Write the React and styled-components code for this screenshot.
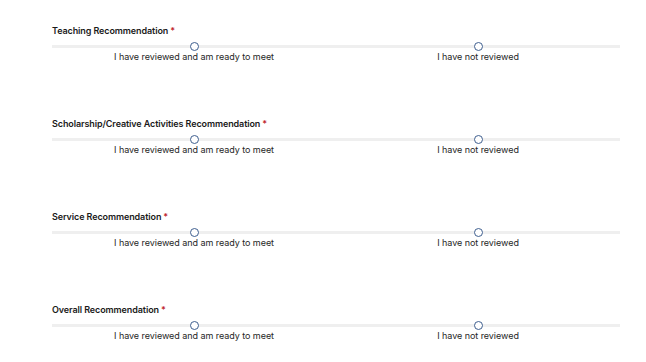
import React from 'react';
import styled, { createGlobalStyle } from 'styled-components';

const GlobalStyle = createGlobalStyle`
    html, body {
        margin: 0;
        padding: 0;
        background: #ffffff;
        font-family: Inter, "Noto Sans", sans-serif;
        color: #1f1f1f;
    }
`;

const Page = styled.div`
    width: 568px;
    padding: 25px 0 0 52px;
    display: flex;
    flex-direction: column;
    gap: 56px;
`;

const Question = styled.fieldset`
    margin: 0;
    padding: 0;
    border: none;
    height: 37px;
`;

const Title = styled.legend`
    padding: 0;
    font-size: 9px;
    font-weight: 600;
    line-height: 12px;
    letter-spacing: -0.1px;
    color: #1a1a1a;
`;

const Required = styled.span`
    color: #c0262d;
    margin-left: 2px;
`;

const Scale = styled.div`
    position: relative;
    margin-top: 5px;
    display: grid;
    grid-template-columns: 1fr 1fr;

    &::before {
        content: '';
        position: absolute;
        left: 0;
        right: 0;
        top: 3px;
        height: 3px;
        background: #efefef;
    }
`;

const Option = styled.label`
    position: relative;
    display: flex;
    flex-direction: column;
    align-items: center;
    cursor: pointer;
`;

const Dot = styled.span`
    width: 9px;
    height: 9px;
    box-sizing: border-box;
    border: 1.2px solid #3f5f8f;
    border-radius: 50%;
    background: #ffffff;
`;

const OptionText = styled.span`
    font-size: 9px;
    line-height: 12px;
    letter-spacing: -0.05px;
    color: #262626;
`;

const questions = [
    'Teaching Recommendation',
    'Scholarship/Creative Activities Recommendation',
    'Service Recommendation',
    'Overall Recommendation',
];

const options = ['I have reviewed and am ready to meet', 'I have not reviewed'];

export default function App() {
    return (
        <>
            <GlobalStyle />
            <Page>
                {questions.map((q) => (
                    <Question key={q}>
                        <Title>
                            {q}
                            <Required>*</Required>
                        </Title>
                        <Scale>
                            {options.map((o) => (
                                <Option key={o}>
                                    <Dot />
                                    <OptionText>{o}</OptionText>
                                </Option>
                            ))}
                        </Scale>
                    </Question>
                ))}
            </Page>
        </>
    );
}
